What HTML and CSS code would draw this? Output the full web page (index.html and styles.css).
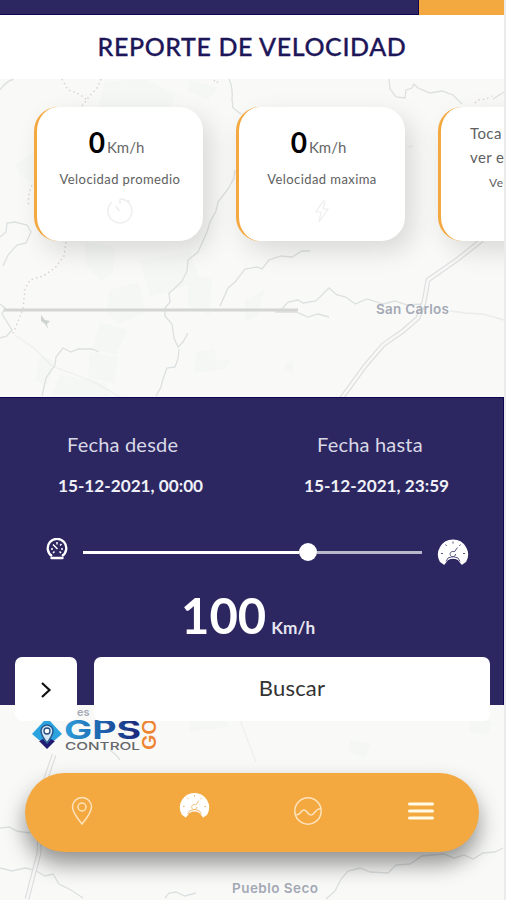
FILE: index.html
```html
<!DOCTYPE html>
<html lang="es">
<head>
    <meta charset="UTF-8">
    <meta name="viewport" content="width=device-width, initial-scale=1.0">
    <title>Reporte de Velocidad</title>
    <link rel="stylesheet" href="styles.css">
</head>
<body>
    <!-- Iconos compartidos -->
    <svg class="sprite" width="0" height="0">
        <symbol id="gauge" viewBox="0 0 32 28">
            <path d="M7 26 L3.500 23.500 A14.300 14.300 0 1 1 28.500 23.500 L25 26 L21.500 21.500 Q16 18.500 10.500 21.500 Z" fill="#fff" stroke="#fff" stroke-width="1.500" stroke-linejoin="round"/>
            <path d="M16 3.500v2M8.500 6.500l1.200 1.500M23.500 6.500l-1.200 1.500M4 15.500h2M28 15.500h-2M9 23.500l2-3.500Q16 17 21 20l2 3.500" fill="none" stroke="currentColor" stroke-width="1"/>
            <path d="M20.500 9.500l-3.200 4.500M18.500 16a2.700 2.700 0 1 1-1.500-2.300" fill="none" stroke="currentColor" stroke-width="1"/>
        </symbol>
    </svg>

    <div class="app">
        <!-- Mapa de fondo -->
        <svg class="map" viewBox="0 0 504 900">
            <g class="woods">
                <path d="M105 82l40-3 30 15-5 15-40-2-35 12zM190 80l28 8-10 12-20-8zM15 165l18-12 14 5-8 28-18-10zM85 242l30 5-2 25-12 9-15-16zM140 260l50-8 10 30-50 15zM110 290l28-8 8 30-28 12-12-12zM188 275l24 4-2 36-22-10zM100 322l28 8-12 25-24-6zM40 356l15 5-8 25-12-5zM90 352l28 5-4 26-26-5zM60 375l45 8 5 13-58-2zM196 352l18-3 3 12 15-2-8 10-30 4zM245 300l18-10 4-8-10 35-12 5zM285 364l8-4v12l-8-1zM190 720l30-5 10 12-40 4zM350 740l20 4-5 14-15-5zM470 718l22 4-4 14-18-4z"/>
            </g>
            <g class="river">
                <path d="M0 90Q6 81 14 79M229 79q4 8 3 20l1 9 8 6M389 79l1 10 6 8 9 1 1-8 6-2 2-4 4 4 12 5 12-2 11 4 9 9M493 99l11-7M0 237l6-5 1-9 8-1 12 3 4 7-5 11-9 2-9 10-5 11M235 170l-1 8-6 11-10 13-2 9-6 11-3 10-9 20-10 8-1 11-5 10-8 8-5 4 1 9-5 6v8l7 8 2 14 4 9 5-5 5-9M179 349l-1 10-3 8-8 1-4 11-2 8-5 9M220 306l8-18 7-6 10-13 12-2 5 2 7-9 12-4 11 1 10-6h8M281 310l7-8 10-2 5 3 13-2 13-13 8 7 9 2 9 7 12-5 16 5 12-3 12 4 17-1M275 312h21l12 5 10-3 11 3M42 396l4-18 9-13 1-8 7-9 8 4 7-3h14l7 3M0 304l5 4-3 6 10 16-5 6-7 2"/>
                <path d="M0 828l9-1 8 4 12 2 9-7M0 868l12 3 13-3 10 2 10 6 8-2 6 10 12 6 12 8M165 898l4-5 7-1 9 4 11-3M326 899l9-8 6-12 7-8 12-3 10 4 18 1 8-8 14-1 12-8 10-1 12-1 10 4 10-3 9 4 10-6 12-1 8-4M110 750l6 5 4 5"/>
                <path d="M408 147l5-1M15 335l20 14 17 17 40 15 30 17M240 720l16 42" opacity=".4"/>
                <path d="M450 311l15 2 18 1 21 6" opacity=".5"/>
            </g>
            <g class="border-line">
                <path d="M62 79l6 11 11 4 8 6-6 7M101 79l-4 9-11 12M214 80l2 3 4-3M32 185q-5 12-3 22M66 242l-2 14-9 12-12 8-13 4-5 9-2 20-8 20-3 6M475 103l3-3 8-1 6-3"/>
            </g>
            <g class="road">
                <path d="M482 240l-24 19-30 21-4 22-6 16-15 13-20 14-18 21-24 33M54 755l-13 38-2 60-12 46"/>
                <path class="road-in" d="M482 240l-24 19-30 21-4 22-6 16-15 13-20 14-18 21-24 33M54 755l-13 38-2 60-12 46"/>
            </g>
            <path class="scale" d="M4 310h294"/>
            <path d="M41 315l4 5 5 1-3 3 1 5-3-5-4-3z" fill="#cfd3d2"/>
            <text x="376" y="314" textLength="73">San Carlos</text>
            <text x="232" y="893" textLength="86">Pueblo Seco</text>
            <text class="small-label" x="77" y="716">es</text>
        </svg>

        <div class="progress"><div class="progress-done"></div></div>

        <header>
            <h1>REPORTE DE VELOCIDAD</h1>
        </header>

        <section class="cards">
            <div class="card">
                <div class="speed"><b>0</b><span>Km/h</span></div>
                <p class="label">Velocidad promedio</p>
                <svg width="28" height="28" viewBox="0 0 28 28" fill="none" stroke="#eeeeef" stroke-width="1.500">
                    <path d="M14 2v5M14 2A12 12 0 1 1 6 5M22 3l2 2M13.500 14l-4-5"/>
                </svg>
            </div>
            <div class="card">
                <div class="speed"><b>0</b><span>Km/h</span></div>
                <p class="label">Velocidad maxima</p>
                <svg width="28" height="28" viewBox="0 0 28 28" fill="none" stroke="#eeeeef" stroke-width="1.200">
                    <path d="M16 3L8 15h5l-2 10 9-13h-5l2-8"/>
                </svg>
            </div>
            <div class="card hint">
                <p class="tap">Toca para<br>ver el mapa</p>
                <p class="label">Velocidad</p>
            </div>
        </section>

        <section class="panel">
            <div class="dates">
                <div class="date">
                    <span class="date-name">Fecha desde</span>
                    <b>15-12-2021, 00:00</b>
                </div>
                <div class="date until">
                    <span class="date-name">Fecha hasta</span>
                    <b>15-12-2021, 23:59</b>
                </div>
            </div>
            <div class="slider">
                <svg class="slow" width="22" height="22" viewBox="0 0 22 22" fill="none" stroke="#fff">
                    <path d="M6 18a9.300 9.300 0 1 1 10 0" stroke-width="2.300"/>
                    <path d="M5.500 20h11" stroke-width="2.400" stroke-linecap="round"/>
                    <path d="M7 6.500l4.500 4.500M11 4v2.500M15.500 6l-1.500 1.500M17 11h-2M5 11h2M15 15l-1.500-1.500M7 15l1.500-1.500" stroke-width="1.500"/>
                </svg>
                <div class="track"><div class="fill"></div><div class="thumb"></div><div class="rest"></div></div>
                <svg class="fast" width="32" height="28"><use href="#gauge"/></svg>
            </div>
            <div class="limit"><b>100</b><span>Km/h</span></div>
        </section>

        <div class="actions">
            <button class="next">
                <svg width="12" height="18" viewBox="0 0 12 18" fill="none" stroke="#111" stroke-width="2.200"><path d="M2 2l7.500 7L2 16"/></svg>
            </button>
            <button class="search">Buscar</button>
        </div>

        <svg class="logo" width="126" height="38" viewBox="0 0 126 38">
            <defs>
                <linearGradient id="gps"><stop offset="0" stop-color="#2f9fdc"/><stop offset=".5" stop-color="#1e62ad"/><stop offset="1" stop-color="#1c2478"/></linearGradient>
            </defs>
            <path d="M0 21L12 8Q15 5 18 8L30 21 23 27H7Z" fill="#2ba3de"/>
            <path d="M7 28l4-2 4 4 4-4 4 2-8 8z" fill="#211d72"/>
            <path d="M15 30Q9 22 9 18a6 6 0 0 1 12 0Q21 22 15 30Z" fill="#d4e7f3" stroke="#285a91" stroke-width="1.500"/>
            <circle cx="15" cy="18" r="3" fill="#fff" stroke="#244c80" stroke-width="1.300"/>
            <text class="logo-gps" x="32" y="26" textLength="77" lengthAdjust="spacingAndGlyphs" fill="url(#gps)">GPS</text>
            <text class="logo-control" x="33" y="37" textLength="75" lengthAdjust="spacingAndGlyphs">CONTROL</text>
            <text class="logo-go" transform="translate(124 37) rotate(-90)" textLength="31" lengthAdjust="spacingAndGlyphs">GO</text>
        </svg>

        <nav>
            <a><svg width="22" height="30" viewBox="0 0 22 30" fill="none" stroke="#fde3bd" stroke-width="1.500">
                <path d="M11 28Q1.500 16.500 1.500 11a9.500 9.500 0 0 1 19 0Q20.500 16.500 11 28Z"/>
                <circle cx="11" cy="11" r="4"/>
            </svg></a>
            <a class="active"><svg width="31" height="28"><use href="#gauge"/></svg></a>
            <a><svg width="30" height="30" viewBox="0 0 30 30" fill="none" stroke="#fde3bd" stroke-width="1.500">
                <circle cx="15" cy="15" r="13.200"/>
                <path d="M2 18q3 2 6-2 3-4 6 0 4 6 8 0 3-4 6-3"/>
            </svg></a>
            <a><svg width="28" height="20" viewBox="0 0 28 20" stroke="#fffbe8" stroke-width="3" stroke-linecap="round"><path d="M2.500 3h23M2.500 10h23M2.500 17h23"/></svg></a>
        </nav>
    </div>
</body>
</html>
```
FILE: styles.css
```css
* {
    box-sizing: border-box;
}
body {
    margin: 0;
    width: 506px;
    height: 900px;
    overflow: hidden;
    background-color: #e9ebec;
    font-family: Lato, "Liberation Sans", sans-serif;
}
h1, p {
    margin: 0;
}
.sprite {
    position: absolute;
}
.app {
    position: relative;
    width: 504px;
    height: 900px;
    overflow: hidden;
    background-color: #f9faf8;
}

/* Mapa */
.map {
    position: absolute;
    top: 0;
    left: 0;
    width: 504px;
    height: 900px;
    fill: none;
}
.woods {
    fill: #f4f7f4;
}
.river {
    stroke: #dce0e0;
    stroke-width: 1.3;
}
.border-line {
    stroke: #dccfd1;
    stroke-width: 1.4;
    stroke-dasharray: 1.5 3;
}
.road {
    stroke: #dedfe0;
    stroke-width: 5;
}
.road-in {
    stroke: #f8f8f7;
    stroke-width: 2.6;
}
.scale {
    stroke: #d4d5d4;
    stroke-width: 3;
}
.map text {
    font-family: Inter, sans-serif;
    font-size: 13.5px;
    font-weight: 600;
    fill: #a4a9b5;
}
.map .small-label {
    font-size: 11px;
}

.progress {
    position: relative;
    height: 15px;
    background-color: #f3a940;
}
.progress-done {
    width: 419px;
    height: 15px;
    background-color: #2c2761;
    border-right: 1px solid #0f0756;
    border-bottom: 1px solid #0f0756;
}
header {
    position: relative;
    height: 64px;
    background-color: #fff;
    text-align: center;
}
h1 {
    font-size: 25px;
    line-height: 62px;
    font-weight: 500;
    color: #1d1658;
    -webkit-text-stroke: 0.3px #1d1658;
    letter-spacing: 0.6px;
    white-space: nowrap;
}

/* Tarjetas */
.cards {
    position: relative;
    display: flex;
    gap: 33px;
    height: 318px;
    padding: 28px 0 0 34px;
    overflow: hidden;
}
.card {
    flex: 0 0 169px;
    height: 134px;
    padding-top: 16px;
    background-color: #fff;
    border-left: 3px solid #f3a940;
    border-radius: 24px;
    box-shadow: 8px 10px 26px rgba(0, 0, 0, 0.13);
    text-align: center;
}
.speed {
    height: 38px;
    line-height: 38px;
    padding-right: 7px;
    color: #666;
}
.speed b {
    font-size: 28px;
    color: #000;
}
.speed span {
    margin-left: 2px;
    font-size: 15px;
}
.label {
    height: 36px;
    line-height: 36px;
    font-size: 13px;
    letter-spacing: 0.42px;
    color: #606060;
    white-space: nowrap;
}
.hint {
    padding: 14px 0 0 29px;
    text-align: left;
}
.tap {
    font-size: 15px;
    line-height: 24px;
    letter-spacing: 0.4px;
    color: #606060;
}
.hint .label {
    padding-left: 19px;
    line-height: 28px;
    font-size: 12px;
}

/* Panel de busqueda */
.panel {
    position: relative;
    height: 308px;
    background-color: #2c2761;
    border-top: 1px solid #0f0756;
    border-right: 1px solid #0f0756;
    color: #fff;
}
.dates {
    display: flex;
    height: 134px;
    padding: 29px 0 0 58px;
}
.date {
    flex: 0 0 246px;
}
.date-name {
    display: block;
    height: 38px;
    line-height: 34px;
    padding-left: 9px;
    font-size: 20px;
    letter-spacing: 0.2px;
    color: #d9d8e6;
}
.until .date-name {
    padding-left: 13px;
}
.date b {
    display: block;
    line-height: 42px;
    font-size: 17.2px;
    color: #f0f0f8;
}
.slider {
    display: flex;
    align-items: center;
    height: 40px;
    padding-left: 46px;
}
.slow {
    margin-top: -7px;
}
.track {
    display: flex;
    align-items: center;
    width: 339px;
    margin: 0 15px;
}
.fill {
    flex: 1;
    height: 3px;
    background-color: #fff;
}
.thumb {
    width: 18px;
    height: 18px;
    border-radius: 50%;
    background-color: #fff;
}
.rest {
    width: 105px;
    height: 3px;
    background-color: #b9b8ca;
}
.fast {
    color: #56517f;
}
.limit {
    padding-left: 181px;
    line-height: 86px;
}
.limit b {
    font-size: 49px;
}
.limit span {
    margin-left: 5px;
    font-size: 17.2px;
    font-weight: bold;
    color: #e6e5f0;
}

.actions {
    position: relative;
    z-index: 1;
    display: flex;
    gap: 17px;
    margin-top: -48px;
    padding: 0 14px 0 15px;
}
button {
    height: 64px;
    padding: 0;
    border: none;
    border-radius: 7px;
    background-color: #fff;
    font-family: inherit;
}
.next {
    width: 62px;
}
.next svg {
    display: block;
    margin: 1px auto 0;
}
.search {
    flex: 1;
    padding-bottom: 4px;
    font-size: 22px;
    letter-spacing: 0.2px;
    color: #333;
}

.logo {
    position: relative;
    display: block;
    margin: -8px 0 0 32px;
}
.logo-gps {
    font: 700 26px Inter, sans-serif;
}
.logo-control {
    font: 500 11px Inter, sans-serif;
    fill: #67686b;
}
.logo-go {
    font: 600 18px Inter, sans-serif;
    fill: #ee8534;
}

/* Menu inferior */
nav {
    position: relative;
    display: flex;
    align-items: center;
    width: 454px;
    height: 79px;
    margin: 22px 0 0 25px;
    padding-right: 1px;
    border-radius: 40px;
    background-color: #f3a940;
    box-shadow: 0 12px 22px rgba(0, 0, 0, 0.42);
}
nav a {
    flex: 1;
    height: 30px;
    display: flex;
    align-items: center;
    justify-content: center;
    margin-top: -4px;
}
nav .active {
    color: #eebb73;
    margin-top: -16px;
}
```
